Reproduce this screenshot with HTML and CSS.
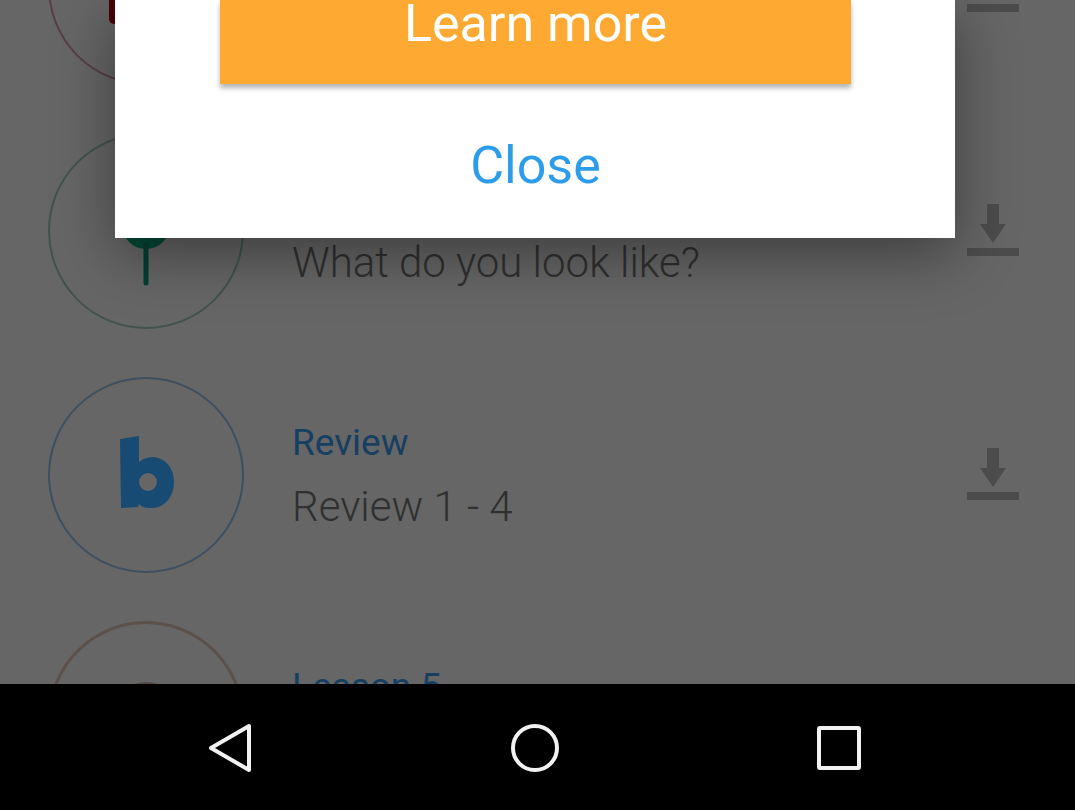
FILE: index.html
```html
<!DOCTYPE html>
<html lang="en">
<head>
<meta charset="utf-8">
<meta name="viewport" content="width=device-width, initial-scale=1">
<title>Lessons</title>
<link rel="stylesheet" href="styles.css">
</head>
<body>
<div class="screen">
  <main class="content">
    <ul class="lessons">
      <li class="lesson">
        <span class="badge badge-red"><svg viewBox="0 0 196 196" aria-hidden="true"><rect x="61" y="60" width="76" height="75" rx="5" fill="#4a0306"/></svg></span>
        <span class="text"></span>
        <button class="download" aria-label="Download"><svg viewBox="0 0 52 54" aria-hidden="true"><path d="M20 0H32V20H39L26 39L13 20H20Z"/><path d="M0 44H52V52H0Z"/></svg></button>
      </li>
      <li class="lesson">
        <span class="badge badge-green"><svg viewBox="0 0 196 196" aria-hidden="true"><circle cx="98" cy="92" r="24" fill="#034936"/><path d="M98 112V150" stroke="#033f32" stroke-width="5" stroke-linecap="round"/></svg></span>
        <span class="text"><span class="title"></span><span class="subtitle">What do you look like?</span></span>
        <button class="download" aria-label="Download"><svg viewBox="0 0 52 54" aria-hidden="true"><path d="M20 0H32V20H39L26 39L13 20H20Z"/><path d="M0 44H52V52H0Z"/></svg></button>
      </li>
      <li class="lesson">
        <span class="badge badge-blue"><svg viewBox="0 0 196 196" aria-hidden="true"><path fill="#174b74" fill-rule="evenodd" d="M72 62L91 59V85C96 81 101 80 106 80C118 82 126 91 126 105C126 121 115 132 102 131C97 131 94 130 91 127L90 130L73 131ZM100 96A9 9 0 1 0 100 114A9 9 0 1 0 100 96Z"/></svg></span>
        <span class="text"><span class="title">Review</span><span class="subtitle">Review 1 - 4</span></span>
        <button class="download" aria-label="Download"><svg viewBox="0 0 52 54" aria-hidden="true"><path d="M20 0H32V20H39L26 39L13 20H20Z"/><path d="M0 44H52V52H0Z"/></svg></button>
      </li>
      <li class="lesson">
        <span class="badge badge-orange"><svg viewBox="0 0 196 196" aria-hidden="true"><ellipse cx="98" cy="93" rx="34" ry="32" fill="#544942"/></svg></span>
        <span class="text"><span class="title">Lesson 5</span><span class="subtitle"></span></span>
      </li>
    </ul>
    <div class="overlay">
      <section class="dialog" role="dialog" aria-label="Learn more">
        <button class="primary">Learn more</button>
        <button class="close">Close</button>
      </section>
    </div>
  </main>
  <nav class="navbar" aria-label="System">
    <button class="key" aria-label="Back"><svg viewBox="0 0 54 54" aria-hidden="true"><path d="M45 6V50L7 28Z"/></svg></button>
    <button class="key" aria-label="Home"><svg viewBox="0 0 54 54" aria-hidden="true"><circle cx="27" cy="28" r="22"/></svg></button>
    <button class="key" aria-label="Recent apps"><svg viewBox="0 0 54 54" aria-hidden="true"><rect x="7" y="8" width="40" height="40" rx="1"/></svg></button>
  </nav>
</div>
</body>
</html>
```
FILE: styles.css
```css
* { box-sizing: border-box; }

body {
  margin: 0;
  background: #000;
  font-family: Roboto, "Liberation Sans", sans-serif;
}

button {
  border: 0;
  padding: 0;
  background: none;
  font: inherit;
}

svg { display: block; width: 100%; }

.screen {
  display: flex;
  flex-direction: column;
  height: 100vh;
}

.content {
  position: relative;
  flex: 1;
  min-height: 0;
  overflow: hidden;
  background: #666;
}

/* The list is scrolled part of the way down. */
.lessons {
  margin: -135px 0 0;
  padding: 0;
  list-style: none;
}

.lesson {
  display: flex;
  align-items: center;
  gap: 48px;
  height: 244px;
  padding: 0 56px 0 48px;
}

.badge {
  flex: none;
  width: 196px;
  height: 196px;
  border: 2px solid;
  border-radius: 50%;
}

.badge svg { margin: -2px; width: 196px; }

.badge-red { border-color: #564044; }
.badge-green { border-color: #42534f; }
.badge-blue { border-color: #3d4f60; }
.badge-orange { border-color: #5b504a; border-width: 3px; }
.badge-orange svg { margin: -3px; }

.text {
  flex: 1;
  display: flex;
  flex-direction: column;
  gap: 12px;
}

.title {
  height: 52px;
  color: #163f61;
  font-size: 37px;
  line-height: 52px;
}

.subtitle {
  height: 52px;
  color: #303030;
  font-size: 42px;
  font-weight: 300;
  line-height: 52px;
}

.download { flex: none; width: 52px; }
.download svg { fill: #4c4c4c; }

.overlay {
  position: absolute;
  inset: 0;
  padding: 0 120px 0 115px;
}

.dialog {
  display: flex;
  flex-direction: column;
  height: 238px;
  padding: 0 104px 34px 105px;
  background: #fff;
  box-shadow: 0 16px 56px rgba(0, 0, 0, 0.4);
}

.primary {
  height: 84px;
  padding-bottom: 36px;
  background: #fda932;
  box-shadow: 0 4px 5px rgba(0, 0, 0, 0.3);
  color: #fff;
  font-size: 52px;
  line-height: 48px;
}

.close {
  align-self: center;
  margin-top: auto;
  color: #2d9de9;
  font-size: 52px;
  line-height: 76px;
}

.navbar {
  display: flex;
  align-items: center;
  justify-content: center;
  gap: 250px;
  height: 126px;
  padding-right: 5px;
  background: #000;
}

.key { width: 54px; }

.key svg {
  fill: none;
  stroke: #f2f2f2;
  stroke-width: 4;
  stroke-linejoin: round;
}
```
